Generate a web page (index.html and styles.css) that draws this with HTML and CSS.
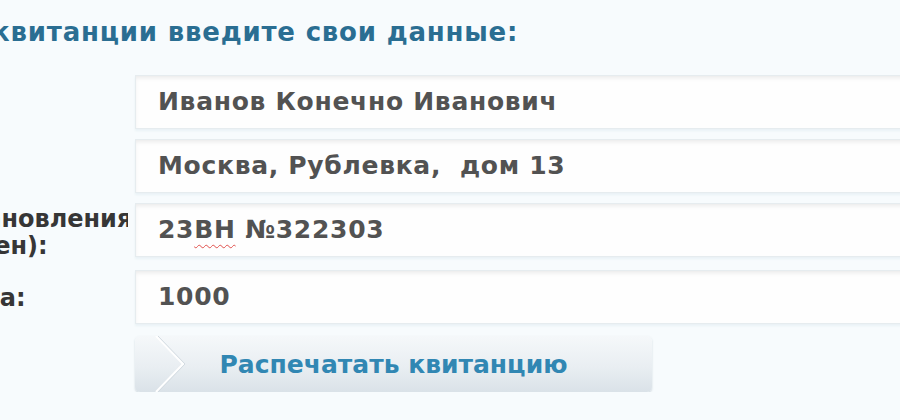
FILE: index.html
```html
<!DOCTYPE html>
<html lang="ru">
<head>
<meta charset="utf-8">
<title>Квитанция</title>
<link rel="stylesheet" href="styles.css">
</head>
<body>
<div class="page">
  <h2 class="title">Для печати квитанции введите свои данные:</h2>
  <form class="form">
    <label class="label">ФИО:</label>
    <div class="field">Иванов Конечно Иванович</div>
    <label class="label">Адрес:</label>
    <div class="field">Москва, Рублевка,&nbsp; дом 13</div>
    <label class="label">Номер постановления<br>(если вынесен):</label>
    <div class="field">23<span class="spell">ВН</span> №322303</div>
    <label class="label">Размер сбора:</label>
    <div class="field">1000</div>
    <span class="label"></span>
    <button type="button" class="btn">
      <svg class="chev" width="40" height="56" viewBox="0 0 40 56" aria-hidden="true">
        <polyline points="1,0 28,28 1,56" fill="none" stroke="#ffffff" stroke-width="2"/>
        <polyline points="3,0 30,28 3,56" fill="none" stroke="#d3dbe1" stroke-width="1"/>
      </svg>
      <span class="btn-text">Распечатать квитанцию</span>
    </button>
  </form>
</div>
</body>
</html>
```

FILE: styles.css
```css
html, body {
  margin: 0;
  padding: 0;
  background: #f7fbfd;
  overflow: hidden;
}
.page {
  width: 1200px;
  margin-left: -174px;
  font-family: "DejaVu Sans", Verdana, sans-serif;
  font-weight: bold;
  font-size: 25px;
}
.title {
  margin: 0 0 0 -24px;
  padding: 17px 0 0 0;
  height: 75px;
  box-sizing: border-box;
  font-size: 26px;
  letter-spacing: 0.8px;
  line-height: 30px;
  white-space: nowrap;
  color: #2a6e92;
}
.form {
  display: grid;
  grid-template-columns: 302px 800px;
  column-gap: 7px;
  row-gap: 10px;
}
.label {
  align-self: center;
  padding-top: 3px;
  color: #363636;
  font-size: 24px;
  line-height: 27px;
  white-space: nowrap;
  overflow: hidden;
}
.field {
  height: 54px;
  box-sizing: border-box;
  padding-left: 22px;
  line-height: 52px;
  letter-spacing: 0.7px;
  background: #fefefe;
  border: 1px solid #e6ecef;
  box-shadow: inset 0 3px 4px -1px rgba(0, 0, 0, 0.08), 0 2px 2px #eaf2f6;
  color: #525252;
}
.spell {
  text-decoration: underline wavy #e0504c;
  text-decoration-thickness: 1px;
  text-underline-offset: 6px;
}
.btn {
  position: relative;
  width: 517px;
  height: 56px;
  margin-top: 2px;
  border: none;
  border-radius: 5px;
  padding: 0;
  background: linear-gradient(#f5f8fa, #e9eef2 55%, #dae2e8);
  box-shadow: 0 1px 2px rgba(120, 140, 155, 0.35);
  font-family: inherit;
  font-weight: bold;
  font-size: 25px;
  color: #3187b3;
  cursor: pointer;
}
.chev {
  position: absolute;
  left: 20px;
  top: 0;
}
.btn-text {
  position: relative;
}
```
